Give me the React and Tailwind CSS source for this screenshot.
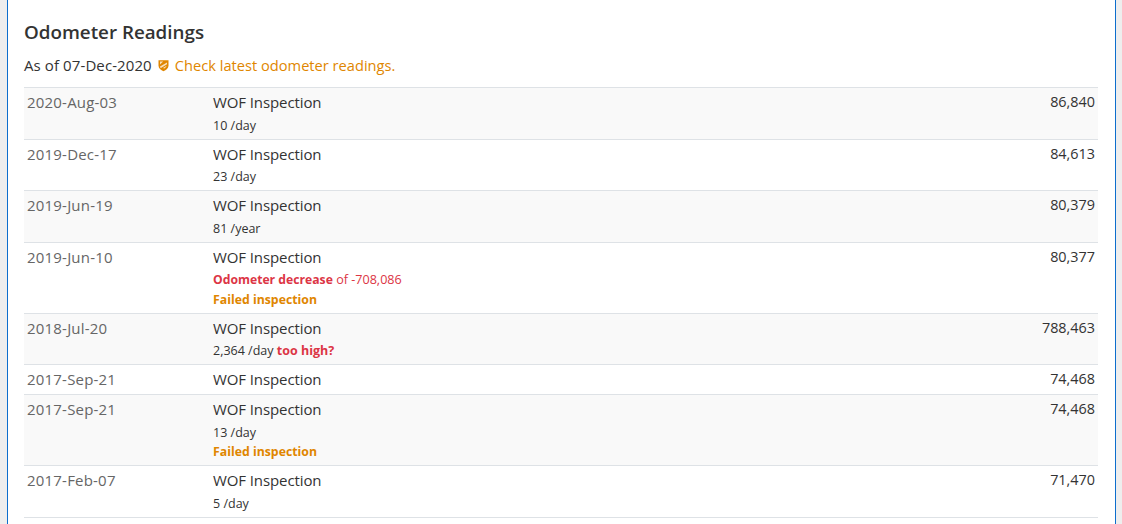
const rows = [
  { date: "2020-Aug-03", km: "86,840", rate: "10 /day", shade: true },
  { date: "2019-Dec-17", km: "84,613", rate: "23 /day" },
  { date: "2019-Jun-19", km: "80,379", rate: "81 /year", shade: true },
  { date: "2019-Jun-10", km: "80,377", decrease: "-708,086", failed: true },
  { date: "2018-Jul-20", km: "788,463", rate: "2,364 /day", high: true, shade: true },
  { date: "2017-Sep-21", km: "74,468" },
  { date: "2017-Sep-21", km: "74,468", rate: "13 /day", failed: true, shade: true },
  { date: "2017-Feb-07", km: "71,470", rate: "5 /day" },
];

const ShieldIcon = () => (
  <svg width="11" height="13" viewBox="0 0 11 13" className="ml-[6px] mr-[6px] inline-block align-[-1px]">
    <path d="M.5 1.2h10v5.6c0 2.6-2.4 4.2-5 5.4-2.6-1.2-5-2.8-5-5.4z" fill="#e08600" />
    <path d="M2 2.6h3.2L2 5.4zM9 3.4v1.8L2.6 9.2 2 7.6zM8.6 6.8c-.3 1.2-1.2 2-2.4 2.8l-1.2-.6z" fill="#fff" fillOpacity=".75" />
  </svg>
);

const Row = ({ row }) => (
  <div className={`flex border-b border-[#dee2e6] px-[3px] py-[3.2px] ${row.shade ? "bg-[#f9f9f9]" : "bg-white"}`}>
    <div className="w-[186px] shrink-0 tracking-[0.2px] text-[#666]">{row.date}</div>
    <div className="flex-1 text-[#333]">
      <div className="tracking-[-0.1px]">WOF Inspection</div>
      {row.rate && (
        <div className="mt-[3.1px] text-[12.5px] leading-[18.6px]">
          {row.rate}
          {row.high && <b className="text-[#dc3545]"> too high?</b>}
        </div>
      )}
      {row.decrease && (
        <div className="mt-[3.1px] text-[12.6px] leading-[18.6px] text-[#dc3545]">
          <b className="text-[12.2px]">Odometer decrease</b> of {row.decrease}
        </div>
      )}
      {row.failed && <div className="text-[12.3px] font-bold leading-[19.4px] text-[#e08600]">Failed inspection</div>}
    </div>
    <div className="text-right text-[14.4px] text-[#333]">{row.km}</div>
  </div>
);

export default function App() {
  return (
    <div className="h-[524px] overflow-hidden bg-[#eee] pl-[7px] pr-[6px] font-['Open_Sans',sans-serif] text-[15px] leading-[22.5px]">
      <div className="h-full border-x border-[#0d6ecd] bg-white pl-[16px] pr-[17px]">
        <h2 className="pt-[19px] text-[18.8px] font-semibold leading-[26px] text-[#333]">Odometer Readings</h2>
        <p className="mb-[10.5px] mt-[9px] text-[#333]">
          <span className="tracking-[0.1px]">As of 07-Dec-2020</span>
          <ShieldIcon />
          <span className="text-[14.65px] text-[#e08600]">Check latest odometer readings.</span>
        </p>
        <div className="border-t border-[#dee2e6]">
          {rows.map((row, i) => (
            <Row key={i} row={row} />
          ))}
        </div>
      </div>
    </div>
  );
}
